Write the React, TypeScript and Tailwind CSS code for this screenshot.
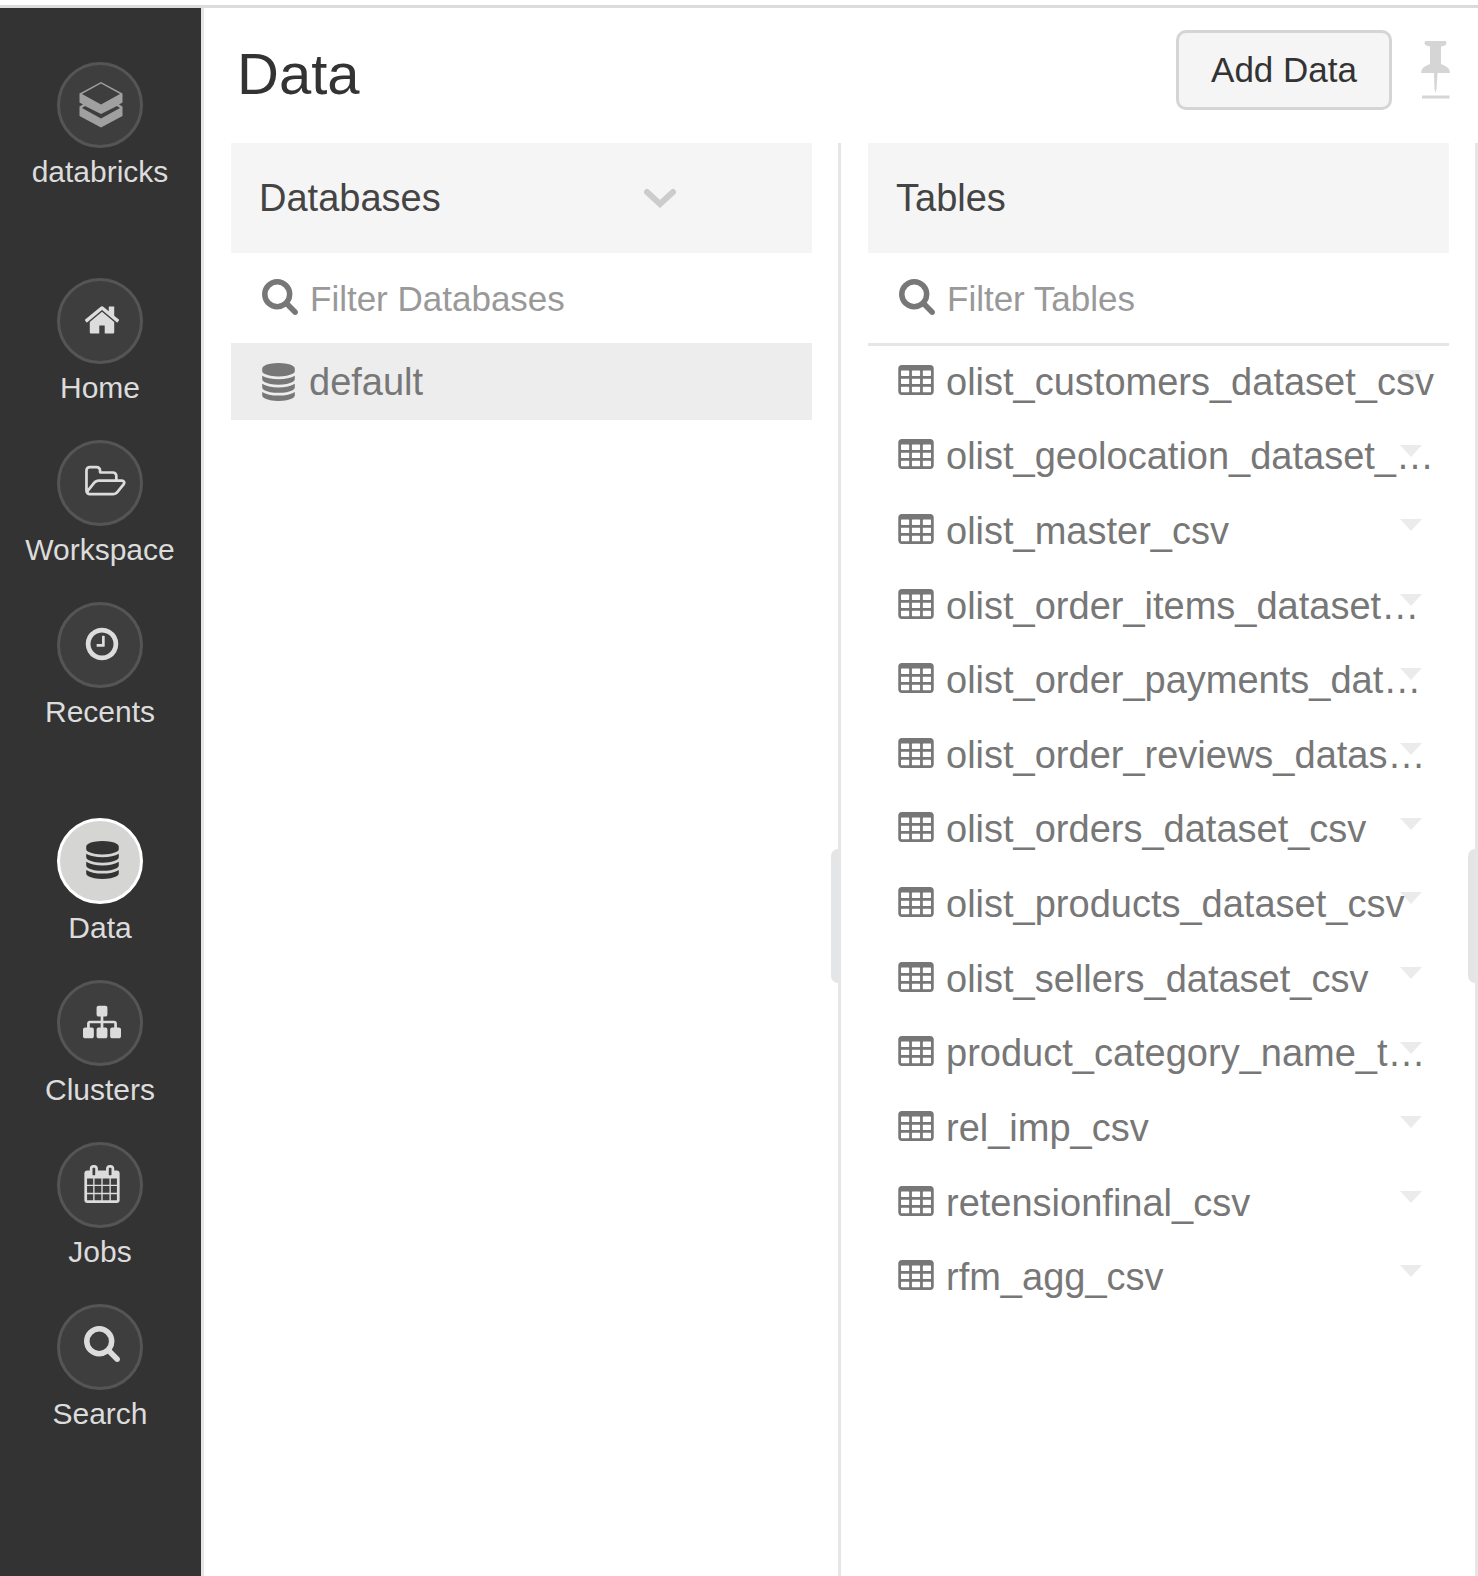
import React from "react";

type Glyph = { d: string; box: string; cls: string };

const cell = (x: number, y: number, w: number) =>
  `M${x + w} ${y + 224}v-192q0-14-9-23t-23-9h-${w - 64}q-14 0-23 9t-9 23v192q0 14 9 23t23 9h${w - 64}q14 0 23-9t9-23z`;

const tableCells = [384, 768, 1152]
  .map((y) => [192, 704, 1216].map((x) => cell(x, y, 384)).join(""))
  .join("");

const glyphs: Record<string, Glyph> = {
  home: {
    box: "0 0 1792 1792",
    cls: "size-[38px]",
    d: "M1472 992v480q0 26-19 45t-45 19h-384v-384h-256v384h-384q-26 0-45-19t-19-45v-480q0-1 .5-3t.5-3l575-474 575 474q1 2 1 6zm223-69l-62 74q-8 9-21 11h-3q-13 0-21-7l-692-577-692 577q-12 8-24 7-13-2-21-11l-62-74q-8-10-7-23.5t11-21.5l719-599q32-26 76-26t76 26l244 204v-195q0-14 9-23t23-9h192q14 0 23 9t9 23v408l219 182q10 8 11 21.5t-7 23.5z",
  },
  folder: {
    box: "-280 0 2200 1792",
    cls: "w-[47px] h-[38px]",
    d: "M1781 931q0-35-53-35h-1088q-40 0-85.5 21.5t-71.5 52.5l-294 363q-18 24-18 40 0 35 53 35h1088q40 0 86-22t71-53l294-363q18-22 18-39zm-1141-163h768v-160q0-40-28-68t-68-28h-576q-40 0-68-28t-28-68v-64q0-40-28-68t-68-28h-320q-40 0-68 28t-28 68v853l256-315q44-53 116-87.5t140-34.5zm1269 163q0 62-46 120l-295 363q-43 53-116 87.5t-140 34.5h-1088q-92 0-158-66t-66-158v-960q0-92 66-158t158-66h320q92 0 158 66t66 158v32h544q92 0 158 66t66 158v160h192q54 0 99 24.5t67 70.5q15 32 15 68z",
  },
  clock: {
    box: "0 0 1792 1792",
    cls: "size-[38px]",
    d: "M1024 544v448q0 14-9 23t-23 9h-320q-14 0-23-9t-9-23v-64q0-14 9-23t23-9h224v-352q0-14 9-23t23-9h64q14 0 23 9t9 23zm416 352q0-148-73-273t-198-198-273-73-273 73-198 198-73 273 73 273 198 198 273 73 273-73 198-198 73-273zm224 0q0 209-103 385.5t-279.5 279.5-385.5 103-385.5-103-279.5-279.5-103-385.5 103-385.5 279.5-279.5 385.5-103 385.5 103 279.5 279.5 103 385.5z",
  },
  database: {
    box: "128 0 1536 1792",
    cls: "w-[33px] h-[38px]",
    d: "M896 768q237 0 443-43t325-127v170q0 69-103 128t-280 93.5-385 34.5-385-34.5-280-93.5-103-128v-170q119 84 325 127t443 43zm0 768q237 0 443-43t325-127v170q0 69-103 128t-280 93.5-385 34.5-385-34.5-280-93.5-103-128v-170q119 84 325 127t443 43zm0-384q237 0 443-43t325-127v170q0 69-103 128t-280 93.5-385 34.5-385-34.5-280-93.5-103-128v-170q119 84 325 127t443 43zm0-1152q208 0 385 34.5t280 93.5 103 128v128q0 69-103 128t-280 93.5-385 34.5-385-34.5-280-93.5-103-128v-128q0-69 103-128t280-93.5 385-34.5z",
  },
  sitemap: {
    box: "0 0 1792 1792",
    cls: "size-[38px]",
    d: "M1792 1248v320q0 40-28 68t-68 28h-320q-40 0-68-28t-28-68v-320q0-40 28-68t68-28h96v-192h-512v192h96q40 0 68 28t28 68v320q0 40-28 68t-68 28h-320q-40 0-68-28t-28-68v-320q0-40 28-68t68-28h96v-192h-512v192h96q40 0 68 28t28 68v320q0 40-28 68t-68 28h-320q-40 0-68-28t-28-68v-320q0-40 28-68t68-28h96v-192q0-52 38-90t90-38h512v-192h-96q-40 0-68-28t-28-68v-320q0-40 28-68t68-28h320q40 0 68 28t28 68v320q0 40-28 68t-68 28h-96v192h512q52 0 90 38t38 90v192h96q40 0 68 28t28 68z",
  },
  calendar: {
    box: "0 0 1792 1792",
    cls: "size-[38px]",
    d: "M192 1664h288v-288h-288v288zm352 0h320v-288h-320v288zm-352-352h288v-320h-288v320zm352 0h320v-320h-320v320zm-352-384h288v-288h-288v288zm736 736h320v-288h-320v288zm-384-736h320v-288h-320v288zm768 736h288v-288h-288v288zm-384-352h320v-320h-320v320zm-352-864v-288q0-13-9.5-22.5t-22.5-9.5h-64q-13 0-22.5 9.5t-9.5 22.5v288q0 13 9.5 22.5t22.5 9.5h64q13 0 22.5-9.5t9.5-22.5zm736 864h288v-320h-288v320zm-384-384h320v-288h-320v288zm384 0h288v-288h-288v288zm32-480v-288q0-13-9.5-22.5t-22.5-9.5h-64q-13 0-22.5 9.5t-9.5 22.5v288q0 13 9.5 22.5t22.5 9.5h64q13 0 22.5-9.5t9.5-22.5zm384-64v1280q0 52-38 90t-90 38h-1408q-52 0-90-38t-38-90v-1280q0-52 38-90t90-38h128v-96q0-66 47-113t113-47h64q66 0 113 47t47 113v96h384v-96q0-66 47-113t113-47h64q66 0 113 47t47 113v96h128q52 0 90 38t38 90z",
  },
  search: {
    box: "64 128 1664 1849",
    cls: "w-[36px] h-[40px]",
    d: "M1216 832q0-185-131.5-316.5t-316.5-131.5-316.5 131.5-131.5 316.5 131.5 316.5 316.5 131.5 316.5-131.5 131.5-316.5zm512 832q0 52-38 90t-90 38q-54 0-90-38l-343-342q-179 124-399 124-143 0-273.5-55.5t-225-150-150-225-55.5-273.5 55.5-273.5 150-225 225-150 273.5-55.5 273.5 55.5 225 150 150 225 55.5 273.5q0 220-124 399l343 343q37 37 37 90z",
  },
  table: {
    box: "64 128 1664 1596",
    cls: "w-[36px] h-[34px]",
    d:
      "M1728 288v1088q0 66-47 113t-113 47h-1344q-66 0-113-47t-47-113v-1088q0-66 47-113t113-47h1344q66 0 113 47t47 113z" +
      tableCells,
  },
};

function Icon({ name }: { name: string }) {
  const g = glyphs[name];
  return (
    <svg viewBox={g.box} className={`${g.cls} shrink-0`} fill="currentColor" fillRule="evenodd" aria-hidden="true">
      <path d={g.d} />
    </svg>
  );
}

function Logo() {
  return (
    <svg viewBox="0 -2 46 48" className="h-[48px] w-[46px]" aria-hidden="true">
      <path
        fill="#a0a0a0"
        fillRule="evenodd"
        d="M22 0L43.500 11.500V20.500L40 22.500L43.500 24.500V34L22 45.500L.5 34V24.500L4 22.500L.5 20.500V11.500ZM22 1.500L3 12L22 22.500L41 12ZM6 24L3 26L22 36.500L41 26L38 24L22 32Z"
      />
    </svg>
  );
}

type NavItem = { label: string; icon: string; active?: boolean };

const groups: NavItem[][] = [
  [{ label: "databricks", icon: "logo" }],
  [
    { label: "Home", icon: "home" },
    { label: "Workspace", icon: "folder" },
    { label: "Recents", icon: "clock" },
  ],
  [
    { label: "Data", icon: "database", active: true },
    { label: "Clusters", icon: "sitemap" },
    { label: "Jobs", icon: "calendar" },
    { label: "Search", icon: "search" },
  ],
];

const tables = [
  "olist_customers_dataset_csv",
  "olist_geolocation_dataset_…",
  "olist_master_csv",
  "olist_order_items_dataset…",
  "olist_order_payments_dat…",
  "olist_order_reviews_datas…",
  "olist_orders_dataset_csv",
  "olist_products_dataset_csv",
  "olist_sellers_dataset_csv",
  "product_category_name_t…",
  "rel_imp_csv",
  "retensionfinal_csv",
  "rfm_agg_csv",
];

function NavLink({ item }: { item: NavItem }) {
  return (
    <a href="#" aria-current={item.active ? "page" : undefined} className="flex flex-col items-center gap-1">
      <span
        className={`flex size-[86px] items-center justify-center rounded-full border-[3px] pb-[3px] pl-1 ${
          item.active ? "border-white bg-[#d5d6d4] text-[#333]" : "border-[#555] bg-[#3e3e3e] text-[#dcdcdc]"
        }`}
      >
        {item.icon === "logo" ? <Logo /> : <Icon name={item.icon} />}
      </span>
      <span className="text-[30px] leading-10 text-[#dcdcdc]">{item.label}</span>
    </a>
  );
}

function Column({
  title,
  filter,
  chevron,
  children,
}: {
  title: string;
  filter: string;
  chevron?: boolean;
  children: React.ReactNode;
}) {
  return (
    <section className="relative min-w-0 flex-1 border-r-[3px] border-[#e6e6e6] pr-[26px] pl-[27px]">
      <header className="flex h-[110px] items-center justify-between bg-[#f5f5f5] pr-[136px] pl-[28px]">
        <h2 className="text-[38px] leading-[44px] text-[#444]">{title}</h2>
        {chevron && (
          <button aria-label="Sort databases">
            <svg viewBox="0 0 32 20" className="h-[20px] w-[32px]" fill="none" stroke="#ccc" strokeWidth="6" aria-hidden="true">
              <path d="M3 4L16 16L29 4" strokeLinecap="round" />
            </svg>
          </button>
        )}
      </header>
      <label className="flex h-[93px] items-center gap-3 border-b-[3px] border-[#e6e6e6] pt-[2px] pl-[31px] text-[#777]">
        <Icon name="search" />
        <input
          type="text"
          placeholder={filter}
          aria-label={filter}
          className="h-[44px] min-w-0 flex-1 text-[35px] outline-none placeholder:text-[#999]"
        />
      </label>
      {children}
      <div className="absolute top-[706px] right-0 h-[134px] w-[7px] rounded-l-[8px] bg-[#e4e5e7]" />
    </section>
  );
}

export default function App() {
  return (
    <div className="flex min-h-screen flex-col bg-white pt-[5px] font-['Liberation_Sans',Arial,sans-serif]">
      <div className="flex flex-1 border-t-[3px] border-[#dbdbdb]">
        <nav className="flex w-[204px] shrink-0 flex-col gap-[86px] border-r-[3px] border-[#e6e6e6] bg-[#333] pt-[54px] pr-px">
          {groups.map((group, i) => (
            <div key={i} className="flex flex-col gap-8">
              {group.map((item) => (
                <NavLink key={item.label} item={item} />
              ))}
            </div>
          ))}
        </nav>
        <main className="flex min-w-0 flex-1 flex-col">
          <div className="flex h-[135px] shrink-0 items-start pt-[22px] pr-[28px] pl-[33px]">
            <h1 className="flex-1 text-[58px] leading-[88px] text-[#333]">Data</h1>
            <button className="h-[80px] w-[216px] rounded-[10px] border-[3px] border-[#d5d5d5] bg-[#f5f5f5] text-[35px] leading-10 text-[#333]">
              Add Data
            </button>
            <button aria-label="Pin panel" className="mt-[11px] ml-[29px]">
              <svg viewBox="0 0 29 58" className="h-[58px] w-[29px]" fill="#d5d5d5" aria-hidden="true">
                <path d="M5 0H24Q25.500 0 25.500 2Q25.500 4.500 20 5.500V23Q29 26 29 32H0Q0 26 9 23V5.500Q3.500 4.500 3.500 2Q3.500 0 5 0ZM13 32H16.500L15.500 48L14.500 52L13.500 48ZM1 54.500H28.500V57.500H1Z" />
              </svg>
            </button>
          </div>
          <div className="flex flex-1">
            <Column title="Databases" filter="Filter Databases" chevron>
              <a href="#" className="-mt-[3px] flex h-[77px] items-center gap-[14px] bg-[#ededed] pl-[31px] text-[38px] leading-[44px] text-[#777]">
                <Icon name="database" />
                default
              </a>
            </Column>
            <Column title="Tables" filter="Filter Tables">
              <ul className="grid h-[970px] auto-rows-fr text-[38px] leading-[44px] text-[#777]">
                {tables.map((name) => (
                  <li key={name} className="relative flex items-center pb-[3px] pl-[30px]">
                    <svg viewBox="0 0 22 12" className="absolute top-6 right-[27px] h-[12px] w-[22px]" fill="#ebebeb" aria-hidden="true">
                      <path d="M0 0H22L11 12Z" />
                    </svg>
                    <a href="#" className="relative flex items-center gap-3 whitespace-nowrap">
                      <Icon name="table" />
                      {name}
                    </a>
                  </li>
                ))}
              </ul>
            </Column>
          </div>
        </main>
      </div>
    </div>
  );
}
